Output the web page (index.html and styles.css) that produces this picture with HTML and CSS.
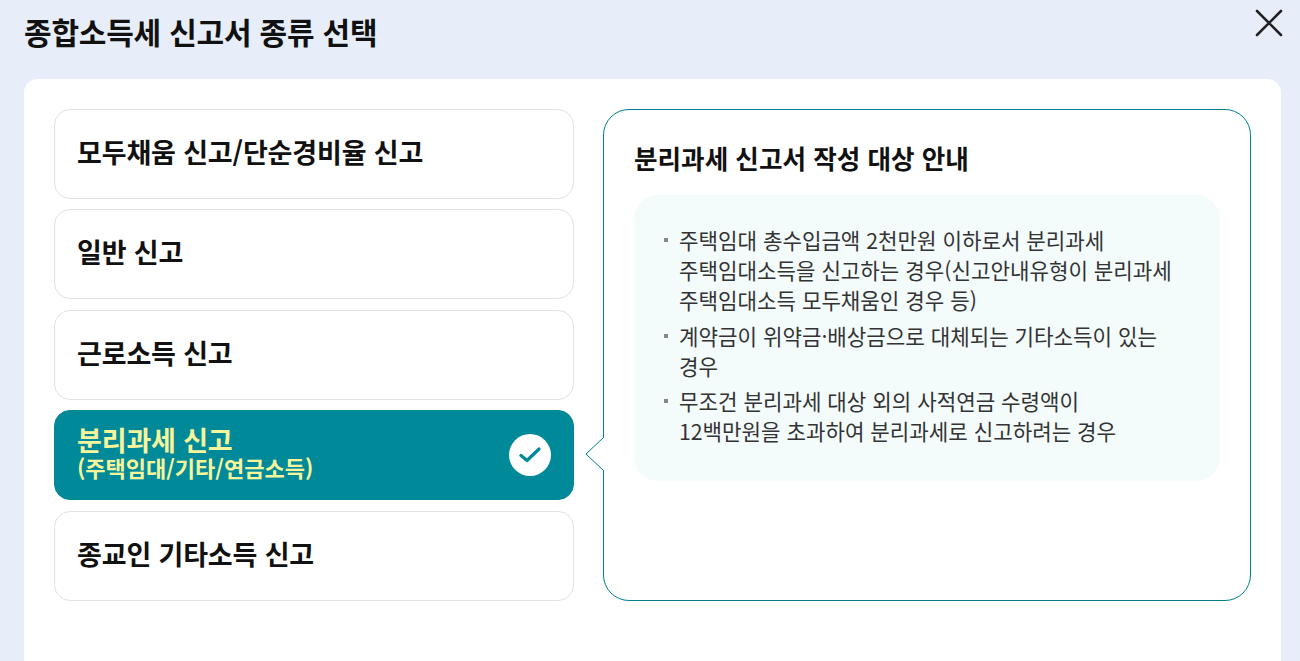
FILE: index.html
```html
<!DOCTYPE html>
<html lang="ko">
<head>
    <meta charset="UTF-8">
    <title>종합소득세 신고서 종류 선택</title>
    <link rel="stylesheet" href="styles.css">
</head>
<body>

<div class="popup">
    <!-- Header -->
    <div class="popup-head">
        <h1>종합소득세 신고서 종류 선택</h1>
        <button class="close" aria-label="닫기">
            <svg width="30" height="30" viewBox="0 0 30 30">
                <path d="M3 3 L27 27 M27 3 L3 27" stroke="#222" stroke-width="2.6" stroke-linecap="round" fill="none"/>
            </svg>
        </button>
    </div>

    <div class="popup-body">
        <!-- Report types -->
        <div class="type-list">
            <button class="type-item">모두채움 신고/단순경비율 신고</button>
            <button class="type-item">일반 신고</button>
            <button class="type-item">근로소득 신고</button>
            <button class="type-item active">
                <span class="type-text">
                    <span class="type-main">분리과세 신고</span>
                    <span class="type-sub">(주택임대/기타/연금소득)</span>
                </span>
                <span class="check">
                    <svg width="22" height="16" viewBox="0 0 22 16">
                        <path d="M2 8.5 L8 13.5 L20 2" stroke="#008a99" stroke-width="3.2" stroke-linecap="round" stroke-linejoin="round" fill="none"/>
                    </svg>
                </span>
            </button>
            <button class="type-item">종교인 기타소득 신고</button>
        </div>

        <!-- Guide -->
        <div class="guide">
            <svg class="guide-tail" width="19" height="36" viewBox="0 0 19 36">
                <path d="M18 2 L1 18 L18 34" fill="#fff" stroke="#00808f" stroke-width="1"/>
                <rect x="18" y="2" width="1" height="32" fill="#fff"/>
            </svg>
            <h2>분리과세 신고서 작성 대상 안내</h2>
            <ul class="guide-box">
                <li>주택임대 총수입금액 2천만원 이하로서 분리과세<br>주택임대소득을 신고하는 경우(신고안내유형이 분리과세<br>주택임대소득 모두채움인 경우 등)</li>
                <li>계약금이 위약금·배상금으로 대체되는 기타소득이 있는<br>경우</li>
                <li>무조건 분리과세 대상 외의 사적연금 수령액이<br>12백만원을 초과하여 분리과세로 신고하려는 경우</li>
            </ul>
        </div>
    </div>
</div>

</body>
</html>
```

FILE: styles.css
```css
html, body {
    margin: 0;
    height: 100%;
}
body {
    font-family: "Noto Sans CJK KR", "Noto Sans", sans-serif;
    background-color: #e7eef9;
    overflow: hidden;
}
.popup-head {
    display: flex;
    justify-content: space-between;
    height: 79px;
    padding: 0 16px 0 24px;
}
h1 {
    margin: 11px 0 0;
    font-size: 30px;
    line-height: 40px;
    font-weight: 700;
    letter-spacing: -0.2px;
    color: #111;
}
.close {
    width: 30px;
    height: 30px;
    margin-top: 8px;
    padding: 0;
    border: none;
    background: none;
}
.popup-body {
    display: flex;
    gap: 29px;
    width: 1197px;
    height: 552px;
    margin-left: 24px;
    padding: 30px;
    background-color: #fff;
    border-radius: 14px 14px 0 0;
}
.type-list {
    display: flex;
    flex-direction: column;
    gap: 10.4px;
    width: 520px;
}
.type-item {
    display: flex;
    align-items: center;
    justify-content: space-between;
    box-sizing: border-box;
    height: 90px;
    padding: 0 22px 5px;
    border: 1px solid #e2e2e2;
    border-radius: 16px;
    background-color: #fff;
    font-family: inherit;
    font-size: 27px;
    font-weight: 700;
    letter-spacing: -0.15px;
    color: #111;
    text-align: left;
}
.type-item.active {
    padding-bottom: 0;
    border-color: #008a99;
    background-color: #008a99;
}
.type-text {
    display: flex;
    flex-direction: column;
    margin-bottom: 6px;
}
.type-main {
    font-size: 27px;
    line-height: 29px;
    color: #f7f59c;
}
.type-sub {
    font-size: 22px;
    line-height: 26px;
    letter-spacing: 0;
    color: #f7f59c;
}
.check {
    display: flex;
    align-items: center;
    justify-content: center;
    width: 42px;
    height: 42px;
    border-radius: 50%;
    background-color: #fff;
}
.guide {
    position: relative;
    box-sizing: border-box;
    width: 648px;
    height: 492px;
    padding: 30px;
    border: 1px solid #00808f;
    border-radius: 26px;
}
.guide-tail {
    position: absolute;
    left: -19px;
    top: 326px;
}
h2 {
    margin: -1px 0 18px;
    font-size: 25.6px;
    line-height: 38px;
    font-weight: 700;
    color: #111;
}
.guide-box {
    height: 286px;
    box-sizing: border-box;
    margin: 0;
    padding: 30px;
    list-style: none;
    background-color: #f3fbfb;
    border-radius: 24px;
}
.guide-box li {
    position: relative;
    padding-left: 15px;
    margin-bottom: 5.5px;
    font-size: 21.2px;
    line-height: 30px;
    color: #333;
}
.guide-box li::before {
    content: "";
    position: absolute;
    left: 0;
    top: 13px;
    width: 4px;
    height: 4px;
    background-color: #888;
}
```
